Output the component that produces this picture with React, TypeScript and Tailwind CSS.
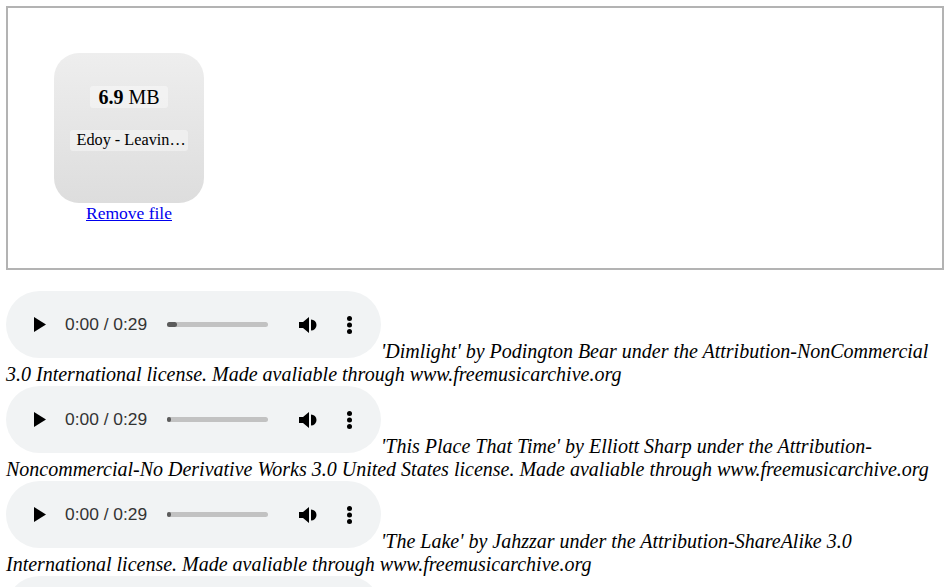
const tracks = [
  {
    title: "'Dimlight' by Podington Bear under the Attribution-NonCommercial 3.0 International license. Made avaliable through www.freemusicarchive.org",
    progress: 10,
  },
  {
    title: "'This Place That Time' by Elliott Sharp under the Attribution-Noncommercial-No Derivative Works 3.0 United States license. Made avaliable through www.freemusicarchive.org",
    progress: 4,
  },
  {
    title: "'The Lake' by Jahzzar under the Attribution-ShareAlike 3.0 International license. Made avaliable through www.freemusicarchive.org",
    progress: 4,
  },
  {
    title: "'Night Owl' by Broke For Free under the Attribution 3.0 International license. Made avaliable through www.freemusicarchive.org",
    progress: 4,
  },
]

function AudioPlayer({ progress }: { progress: number }) {
  return (
    <span className="inline-block align-baseline overflow-hidden w-[375px] h-[67px] rounded-full bg-[#f1f3f4]">
      <span className="flex items-center h-full">
        <svg className="ml-[28px] w-[12px] h-[15px]" viewBox="0 0 12 15">
          <path d="M0 0 L12 7.5 L0 15 Z" fill="#000" />
        </svg>
        <span className="ml-[19px] w-[86px] text-[17.4px] text-[#333] font-['Liberation_Sans',Arial,sans-serif] leading-none not-italic">
          0:00 / 0:29
        </span>
        <span className="ml-[16px] relative w-[101px] h-[5px] rounded-full bg-[#c2c2c2]">
          <span className="absolute left-0 top-0 h-[5px] rounded-full bg-[#5b5b5b]" style={{ width: progress }} />
        </span>
        <svg className="ml-[31px] w-[20px] h-[16px]" viewBox="0 0 20 16">
          <path d="M0 5 H4 L10 0 V16 L4 11 H0 Z" fill="#000" />
          <path d="M12 2.5 A5.5 5.5 0 0 1 12 13.5 Z" fill="#000" />
        </svg>
        <svg className="ml-[27px] w-[7px] h-[18px]" viewBox="0 0 7 18">
          <circle cx="3.5" cy="2.5" r="2.5" fill="#000" />
          <circle cx="3.5" cy="9" r="2.5" fill="#000" />
          <circle cx="3.5" cy="15.5" r="2.5" fill="#000" />
        </svg>
      </span>
    </span>
  )
}

export default function App() {
  return (
    <div className="px-[6px] pt-[6px] bg-white text-black font-['Liberation_Serif','Times_New_Roman',serif]">
      <div className="border-2 border-[#b3b3b3] pl-[46px] py-[45px]">
        <div className="w-[150px] flex flex-col items-center">
          <div className="w-[150px] h-[150px] rounded-[25px] bg-linear-to-b from-[#eeeeee] to-[#dddddd] px-[16px] pt-[33px] text-center">
            <div className="text-[20px] leading-[22px]">
              <span className="bg-white/40 rounded-[3px] px-[8px] inline-block">
                <strong>6.9</strong> MB
              </span>
            </div>
            <div className="mt-[22px] text-[16.25px] leading-[21px] text-left whitespace-nowrap overflow-hidden text-ellipsis bg-white/40 rounded-[3px] pl-[6.5px]">
              Edoy - Leaving Home.mp3
            </div>
          </div>
          <a href="#" className="text-[17.5px] leading-[20px] text-[#0000ee] underline">
            Remove file
          </a>
        </div>
      </div>
      <div className="mt-[21px] text-[20px] leading-[normal]">
        {tracks.map((t, i) => (
          <div key={i}>
            <AudioPlayer progress={t.progress} />
            <i>{t.title}</i>
          </div>
        ))}
      </div>
    </div>
  )
}
